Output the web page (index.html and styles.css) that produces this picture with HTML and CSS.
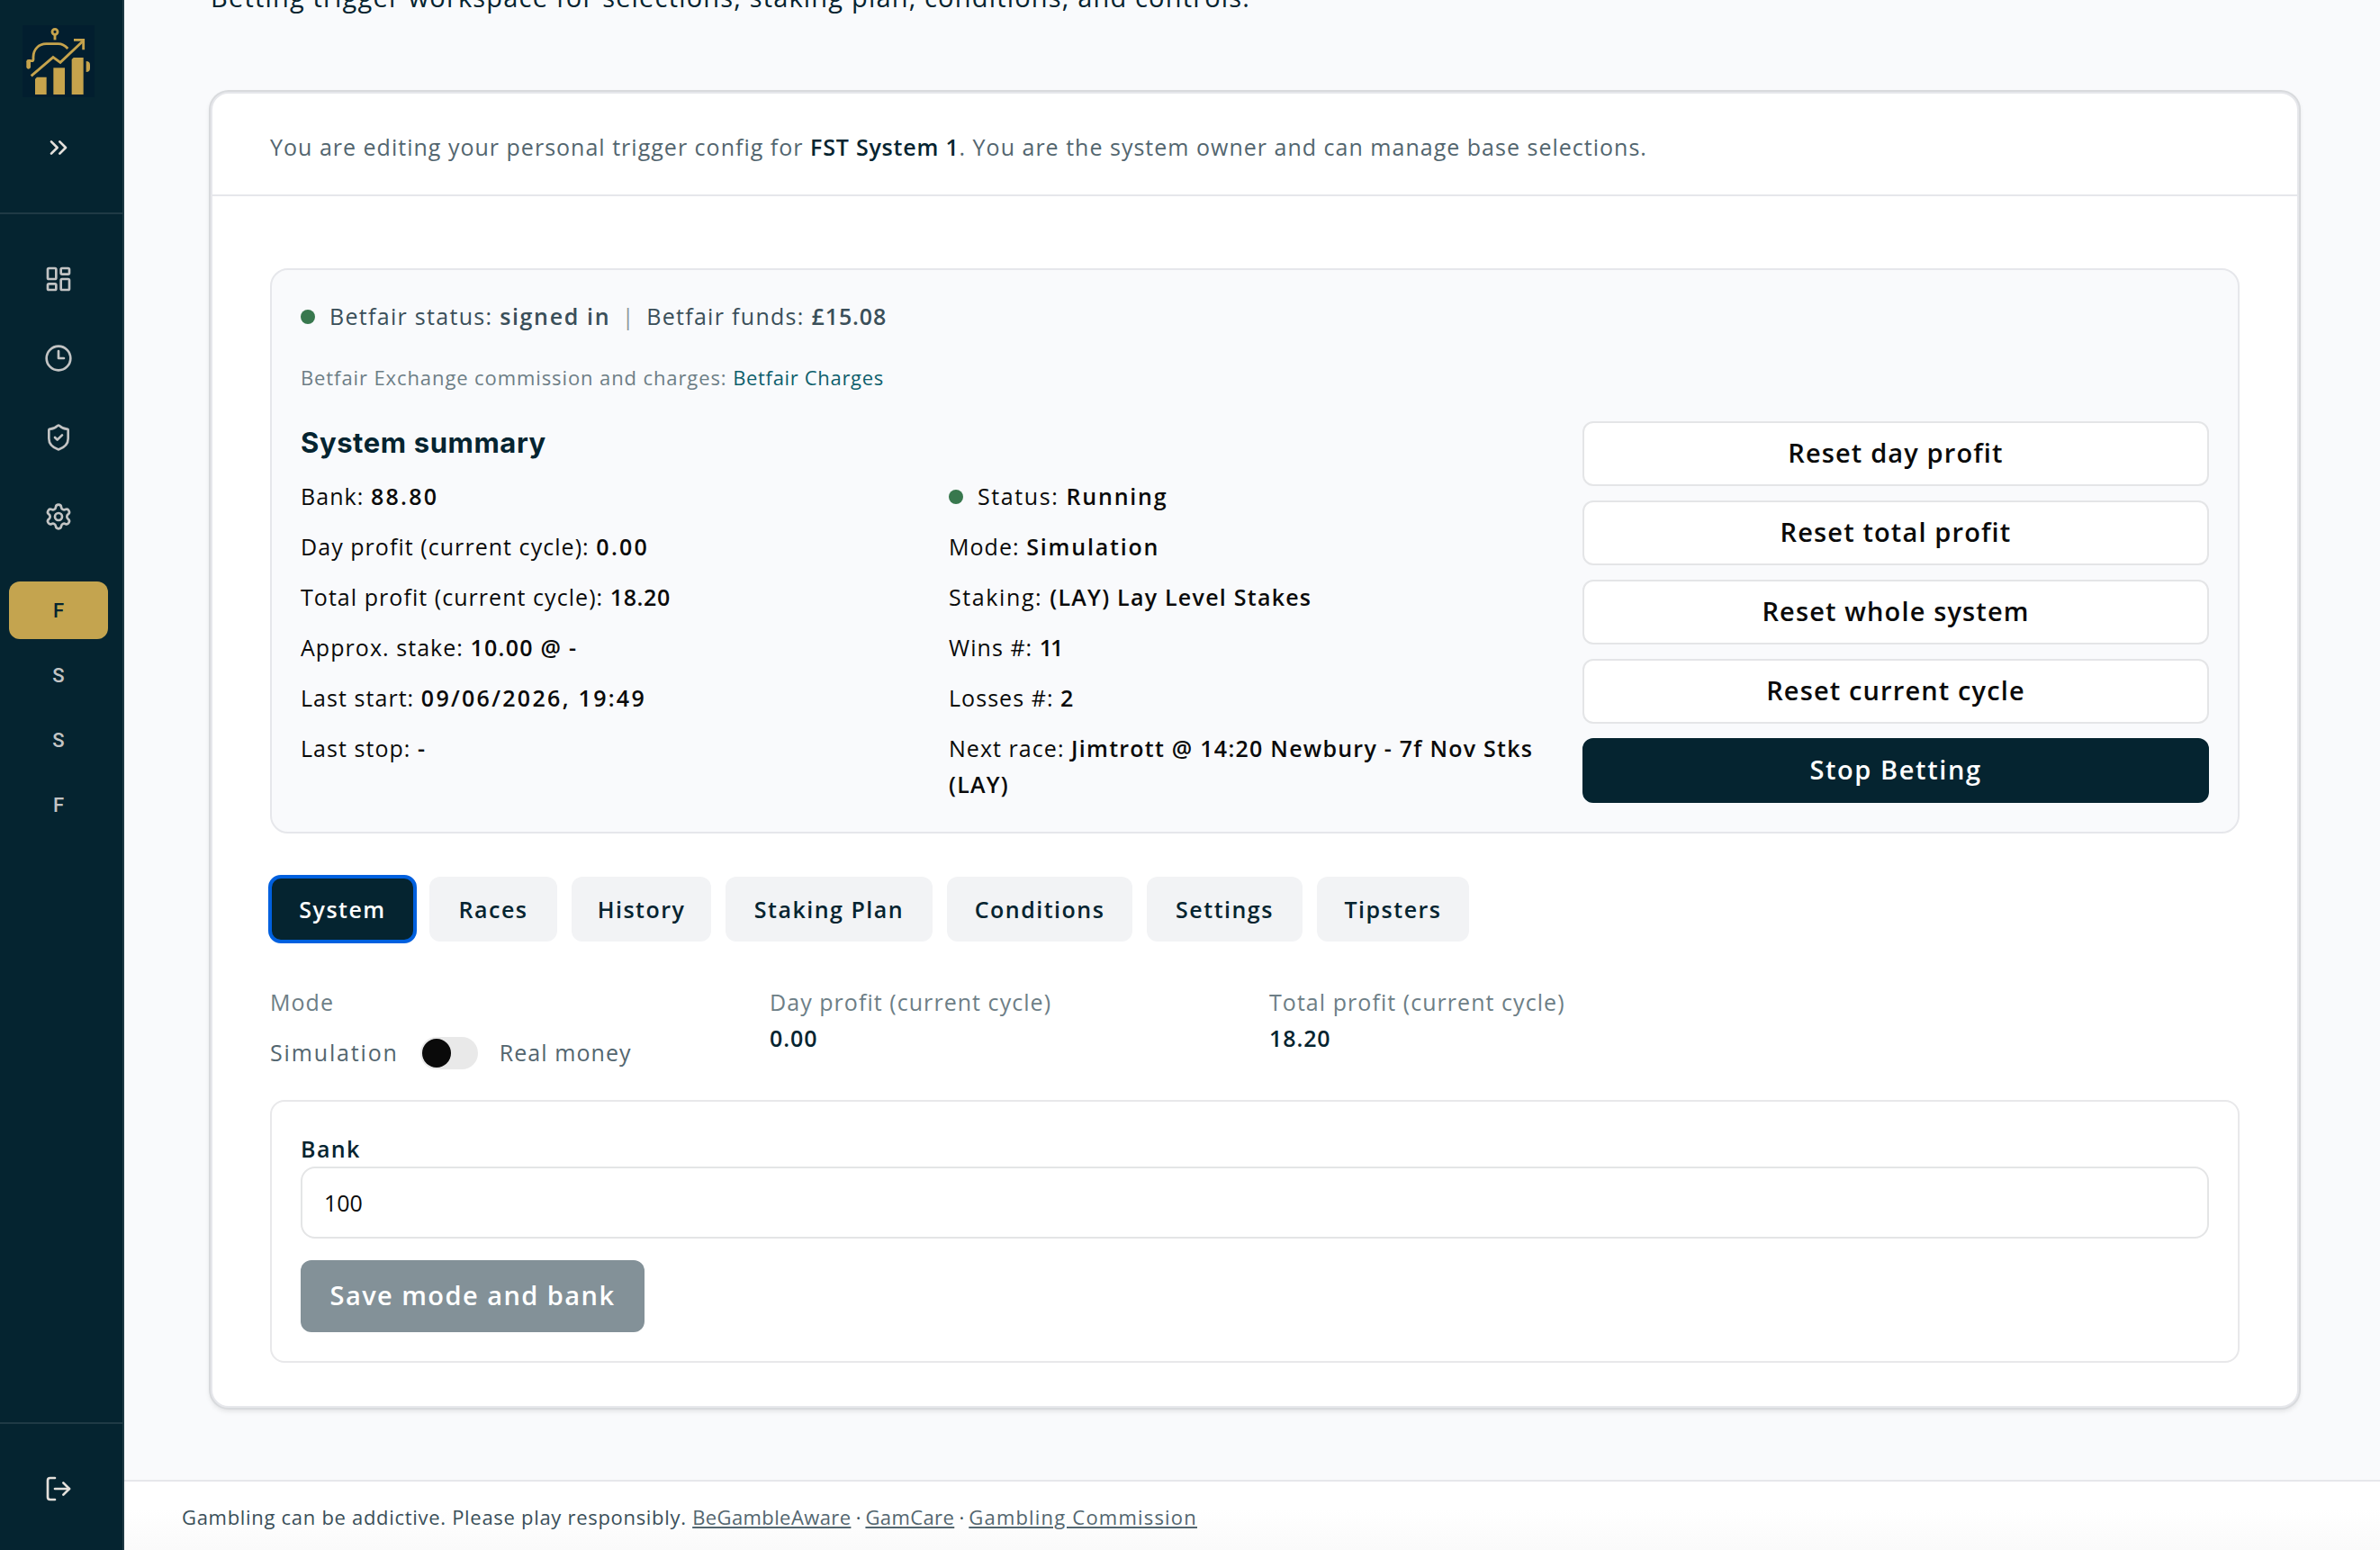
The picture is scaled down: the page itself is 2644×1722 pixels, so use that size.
FILE: index.html
```
<!DOCTYPE html>
<html lang="en">

<head>
    <meta charset="UTF-8">
    <meta name="viewport" content="width=device-width, initial-scale=1.0">
    <title>FST System 1</title>
    <link rel="stylesheet" href="styles.css">
</head>

<body>
    <div class="layout">
        <!-- Sidebar -->
        <aside class="sidebar">
            <div class="sidebar-top">
                <svg class="logo" viewBox="76 84 240 240">
                    <rect class="logo-bg" x="76" y="84" width="240" height="240"/>
                    <g class="logo-line">
                        <circle cx="184" cy="106" r="9"/>
                        <path d="M184 117v16"/>
                        <path d="M96 226v-17q0-6 7-6h4q5 0 5-6v-7c0-25 18-44 43-44h40c13 0 23 6 32 16"/>
                        <path d="M105 253l73-62 24 17 75-71"/>
                        <path d="M247 133h32v33"/>
                    </g>
                    <g class="logo-fill">
                        <path d="M89 205q0-7 7-7h7v25q0 7-7 7t-7-7z"/>
                        <path d="M288 204q13 0 13 12v12q0 12-13 12z"/>
                        <path d="M118 263l6-6h32v58h-38z"/>
                        <path d="M179 226h38v89h-38z"/>
                        <path d="M240 198l6-6h33v123h-39z"/>
                    </g>
                </svg>
                <svg class="icon icon-light" viewBox="0 0 24 24"><path d="m6 17 5-5-5-5"/><path d="m13 17 5-5-5-5"/></svg>
            </div>
            <nav class="sidebar-nav">
                <a class="nav-icon"><svg class="icon" viewBox="0 0 24 24"><rect x="3" y="3" width="7" height="9" rx="1"/><rect x="14" y="3" width="7" height="5" rx="1"/><rect x="14" y="12" width="7" height="9" rx="1"/><rect x="3" y="16" width="7" height="5" rx="1"/></svg></a>
                <a class="nav-icon"><svg class="icon" viewBox="0 0 24 24"><circle cx="12" cy="12" r="10"/><path d="M12 6v6h4.5"/></svg></a>
                <a class="nav-icon"><svg class="icon" viewBox="0 0 24 24"><path d="M20 13c0 5-3.5 7.5-7.66 8.95a1 1 0 0 1-.67-.01C7.5 20.5 4 18 4 13V6a1 1 0 0 1 1-1c2 0 4.5-1.2 6.24-2.72a1.17 1.17 0 0 1 1.52 0C14.51 3.81 17 5 19 5a1 1 0 0 1 1 1z"/><path d="m9 12 2 2 4-4"/></svg></a>
                <a class="nav-icon"><svg class="icon" viewBox="0 0 24 24"><path d="M9.671 4.136a2.34 2.34 0 0 1 4.659 0 2.34 2.34 0 0 0 3.319 1.915 2.34 2.34 0 0 1 2.33 4.033 2.34 2.34 0 0 0 0 3.831 2.34 2.34 0 0 1-2.33 4.033 2.34 2.34 0 0 0-3.319 1.915 2.34 2.34 0 0 1-4.659 0 2.34 2.34 0 0 0-3.32-1.915 2.34 2.34 0 0 1-2.33-4.033 2.34 2.34 0 0 0 0-3.831A2.34 2.34 0 0 1 6.35 6.051a2.34 2.34 0 0 0 3.319-1.915"/><circle cx="12" cy="12" r="3"/></svg></a>
            </nav>
            <div class="systems">
                <a class="system active">F</a>
                <a class="system">S</a>
                <a class="system">S</a>
                <a class="system">F</a>
            </div>
            <div class="sidebar-bottom">
                <svg class="icon icon-light" viewBox="0 0 24 24"><path d="M9 21H5a2 2 0 0 1-2-2V5a2 2 0 0 1 2-2h4"/><path d="m16 17 5-5-5-5"/><path d="M21 12H9"/></svg>
            </div>
        </aside>

        <div class="page">
            <main>
                <p class="lead">Betting trigger workspace for selections, staking plan, conditions, and controls.</p>

                <section class="card">
                    <p class="card-head">You are editing your personal trigger config for <b>FST System 1</b>. You are the system owner and can manage base selections.</p>

                    <div class="card-body">
                        <!-- System summary -->
                        <div class="summary">
                            <div class="status">
                                <span class="dot"></span>
                                <span>Betfair status: <strong>signed in</strong></span>
                                <span class="divider">|</span>
                                <span>Betfair funds: <strong class="funds">£15.08</strong></span>
                            </div>
                            <p class="charges">Betfair Exchange commission and charges: <a>Betfair Charges</a></p>
                            <div class="summary-grid">
                                <div class="facts">
                                    <h2>System summary</h2>
                                    <div class="fact-columns">
                                        <ul>
                                            <li>Bank: <strong class="num">88.80</strong></li>
                                            <li>Day profit (current cycle): <strong class="num">0.00</strong></li>
                                            <li>Total profit (current cycle): <strong class="total">18.20</strong></li>
                                            <li>Approx. stake: <strong>10.00 @ -</strong></li>
                                            <li>Last start: <strong class="num">09/06/2026, 19:49</strong></li>
                                            <li>Last stop: <strong>-</strong></li>
                                        </ul>
                                        <ul>
                                            <li class="with-dot"><span class="dot"></span><span>Status: <strong class="wide">Running</strong></span></li>
                                            <li>Mode: <strong class="wide">Simulation</strong></li>
                                            <li class="staking">Staking: <strong>(LAY) Lay Level Stakes</strong></li>
                                            <li>Wins #: <strong class="ones">11</strong></li>
                                            <li>Losses #: <strong>2</strong></li>
                                            <li>Next race: <strong>Jimtrott @ 14:20 Newbury - 7f Nov Stks (LAY)</strong></li>
                                        </ul>
                                    </div>
                                </div>
                                <div class="actions">
                                    <button class="btn">Reset day profit</button>
                                    <button class="btn">Reset total profit</button>
                                    <button class="btn">Reset whole system</button>
                                    <button class="btn">Reset current cycle</button>
                                    <button class="btn btn-dark">Stop Betting</button>
                                </div>
                            </div>
                        </div>

                        <!-- Tabs -->
                        <div class="tabs">
                            <button class="tab selected">System</button>
                            <button class="tab">Races</button>
                            <button class="tab">History</button>
                            <button class="tab">Staking Plan</button>
                            <button class="tab">Conditions</button>
                            <button class="tab">Settings</button>
                            <button class="tab">Tipsters</button>
                        </div>

                        <div class="stats">
                            <div>
                                <p class="stat-label">Mode</p>
                                <div class="mode">
                                    <span class="simulation">Simulation</span>
                                    <span class="switch"></span>
                                    <span>Real money</span>
                                </div>
                            </div>
                            <div>
                                <p class="stat-label">Day profit (current cycle)</p>
                                <p class="stat-value">0.00</p>
                            </div>
                            <div>
                                <p class="stat-label">Total profit (current cycle)</p>
                                <p class="stat-value">18.20</p>
                            </div>
                        </div>

                        <!-- Bank form -->
                        <form class="bank">
                            <label for="bank">Bank</label>
                            <input type="text" id="bank" value="100">
                            <button type="button" class="save">Save mode and bank</button>
                        </form>
                    </div>
                </section>
            </main>

            <footer>
                Gambling can be addictive. Please play responsibly. <a>BeGambleAware</a><span class="sep"> · </span><a>GamCare</a><span class="sep"> · </span><a class="commission">Gambling Commission</a>
            </footer>
        </div>
    </div>
</body>

</html>
```
FILE: styles.css
```
* {
    box-sizing: border-box;
}
body {
    margin: 0;
    background-color: #f9fafc;
    color: #0a0a0a;
    font-family: "Open Sans", "Noto Sans", sans-serif;
    font-size: 25px;
    line-height: 40px;
    letter-spacing: 1.05px;
}
p, h2, ul {
    margin: 0;
    padding: 0;
}
ul {
    list-style-type: none;
}
button, input {
    font-family: inherit;
}
.layout {
    display: flex;
    height: 1722px;
    overflow: hidden;
}

/* Sidebar */
.sidebar {
    display: flex;
    flex-direction: column;
    flex: none;
    width: 138px;
    background-color: #052430;
    border-right: 2px solid #1f3a45;
}
.sidebar-top {
    display: flex;
    flex-direction: column;
    align-items: center;
    gap: 40px;
    height: 238px;
    padding: 28px 6px 0 0;
    border-bottom: 2px solid #1f3a45;
}
.logo {
    display: block;
    width: 80px;
    height: 80px;
}
.logo-bg {
    fill: #021e2f;
}
.logo-line {
    fill: none;
    stroke: #c6a34c;
    stroke-width: 8.5;
}
.logo-fill {
    fill: #c6a34c;
}
.icon {
    display: block;
    width: 32px;
    height: 32px;
    fill: none;
    stroke: #c3c4c4;
    stroke-width: 2;
    stroke-linecap: round;
    stroke-linejoin: round;
}
.icon-light {
    stroke: #e4e0db;
}
.sidebar-nav {
    display: flex;
    flex-direction: column;
    gap: 24px;
    padding: 40px 6px 0 0;
}
.nav-icon {
    display: flex;
    align-items: center;
    justify-content: center;
    height: 64px;
}
.systems {
    display: flex;
    flex-direction: column;
    gap: 8px;
    padding: 40px 16px 0 10px;
}
.system {
    height: 64px;
    border-radius: 12px;
    color: #c3c4c4;
    font-family: "Roboto", sans-serif;
    font-size: 22px;
    font-weight: 500;
    line-height: 65px;
    letter-spacing: 0;
    text-align: center;
}
.system.active {
    background-color: #c4a44f;
    color: #052430;
}
.sidebar-bottom {
    display: flex;
    justify-content: center;
    height: 142px;
    margin-top: auto;
    padding: 56px 6px 0 0;
    border-top: 2px solid #1f3a45;
}

/* Page */
.page {
    display: flex;
    flex-direction: column;
    flex: 1;
}
main {
    padding: 0 90px 0 96px;
}
.lead {
    margin-top: -27px;
    color: #052430;
    font-size: 29px;
    line-height: 48px;
    letter-spacing: 1.18px;
}
.card {
    margin-top: 81px;
    background-color: white;
    border: 2px solid #e6e7eb;
    border-radius: 20px;
    box-shadow: 0 0 0 2px #d8dadd, 0 3px 6px rgba(0, 0, 0, 0.13);
}
.card-head {
    height: 114px;
    padding: 39px 64px 0;
    border-bottom: 2px solid #e6e7eb;
    color: #53666f;
    letter-spacing: 1.01px;
}
.card-head b {
    color: #052430;
    font-weight: 600;
    letter-spacing: 0.8px;
}
.card-body {
    padding: 80px 64px 48px;
}

/* System summary */
.summary {
    padding: 31px 32px 32px;
    background-color: #f9fafc;
    border: 2px solid #e6e7eb;
    border-radius: 20px;
}
.status {
    display: flex;
    align-items: center;
    color: #3a4f59;
    letter-spacing: 1.3px;
}
.status strong {
    letter-spacing: 1.65px;
}
.status .funds {
    letter-spacing: 0.9px;
}
.dot {
    width: 16px;
    height: 16px;
    margin: 2px 16px 0 0;
    border-radius: 50%;
    background-color: #38784e;
}
.divider {
    width: 40px;
    color: #8d999f;
    text-align: center;
}
.charges {
    margin: 32px 0 33px;
    color: #6d7e86;
    font-size: 22px;
    line-height: 32px;
    letter-spacing: 0.9px;
}
.charges a {
    color: #0d5f6c;
    letter-spacing: 0.67px;
}
.summary-grid {
    display: grid;
    grid-template-columns: 1392px 696px;
    gap: 32px;
}
.facts h2 {
    margin-bottom: 15px;
    color: #052430;
    font-family: "Inter", sans-serif;
    font-size: 31px;
    line-height: 48px;
    letter-spacing: 0.6px;
}
.fact-columns {
    display: grid;
    grid-template-columns: 672px 672px;
    gap: 48px;
}
.fact-columns ul {
    display: flex;
    flex-direction: column;
    gap: 16px;
}
strong {
    font-weight: 600;
    letter-spacing: 1.25px;
}
.num {
    letter-spacing: 2.3px;
}
.total {
    letter-spacing: 0.6px;
}
.wide {
    letter-spacing: 1.8px;
}
.ones {
    letter-spacing: -2px;
}
.with-dot {
    display: flex;
    align-items: center;
    letter-spacing: 1.6px;
}
.staking {
    letter-spacing: 1.6px;
}
.actions {
    display: flex;
    flex-direction: column;
    gap: 16px;
}
.btn {
    height: 72px;
    padding: 0 0 3px;
    background-color: white;
    border: 2px solid #e4e5e7;
    border-radius: 12px;
    color: #0a0a0a;
    font-size: 29px;
    font-weight: 600;
    letter-spacing: 1.13px;
}
.btn-dark {
    background-color: #052430;
    border-color: #052430;
    color: white;
    letter-spacing: 1.6px;
}

/* Tabs */
.tabs {
    display: grid;
    grid-template-columns: 161px 142px 155px 230px 206px 173px 169px;
    gap: 16px;
    margin-top: 48px;
}
.tab {
    height: 72px;
    padding: 0 0 1px;
    background-color: #f2f3f5;
    border: none;
    border-radius: 12px;
    color: #052430;
    font-size: 25px;
    font-weight: 600;
    letter-spacing: 1.5px;
}
.tab.selected {
    background-color: #052430;
    color: white;
    outline: 4px solid #0060df;
    outline-offset: -2px;
}

.stats {
    display: grid;
    grid-template-columns: repeat(4, 1fr);
    gap: 32px;
    margin-top: 47px;
}
.stat-label {
    color: #6d7e86;
}
.stat-value {
    color: #052430;
    font-weight: 600;
    letter-spacing: 0.9px;
}
.mode {
    display: flex;
    align-items: center;
    margin-top: 16px;
    color: #53666f;
}
.simulation {
    letter-spacing: 1.85px;
}
.switch {
    width: 64px;
    height: 36px;
    margin: 2px 24px 0 24px;
    padding: 2px;
    border-radius: 18px;
    background-color: #e9e9e9;
}
.switch::before {
    content: "";
    display: block;
    width: 32px;
    height: 32px;
    border-radius: 50%;
    background-color: #0a0a0a;
}

/* Bank form */
.bank {
    display: flex;
    flex-direction: column;
    align-items: flex-start;
    margin-top: 33px;
    padding: 32px;
    border: 2px solid #e8e8ea;
    border-radius: 16px;
}
.bank label {
    color: #052430;
    font-weight: 600;
    letter-spacing: 1.4px;
}
.bank input {
    width: 100%;
    height: 80px;
    padding: 0 24px;
    background-color: white;
    border: 2px solid #e4e5e6;
    border-radius: 16px;
    color: #0a0a0a;
    font-size: 25px;
    letter-spacing: 0;
}
.save {
    width: 382px;
    height: 80px;
    margin-top: 24px;
    padding: 0 0 3px;
    background-color: #839198;
    border: none;
    border-radius: 12px;
    color: white;
    font-size: 29px;
    font-weight: 600;
    letter-spacing: 1.45px;
}

/* Footer */
footer {
    height: 78px;
    margin-top: auto;
    padding: 19px 64px 0;
    background: linear-gradient(white 40%, #fafafa);
    border-top: 2px solid #e6e7eb;
    color: #3a4f59;
    font-size: 22px;
    letter-spacing: 0.7px;
}
footer a {
    color: #53666f;
    letter-spacing: 0.4px;
    text-decoration: underline;
    text-decoration-thickness: 2px;
    text-underline-offset: 2px;
}
footer .sep {
    letter-spacing: -0.4px;
}
footer .commission {
    letter-spacing: 1.2px;
}
```
